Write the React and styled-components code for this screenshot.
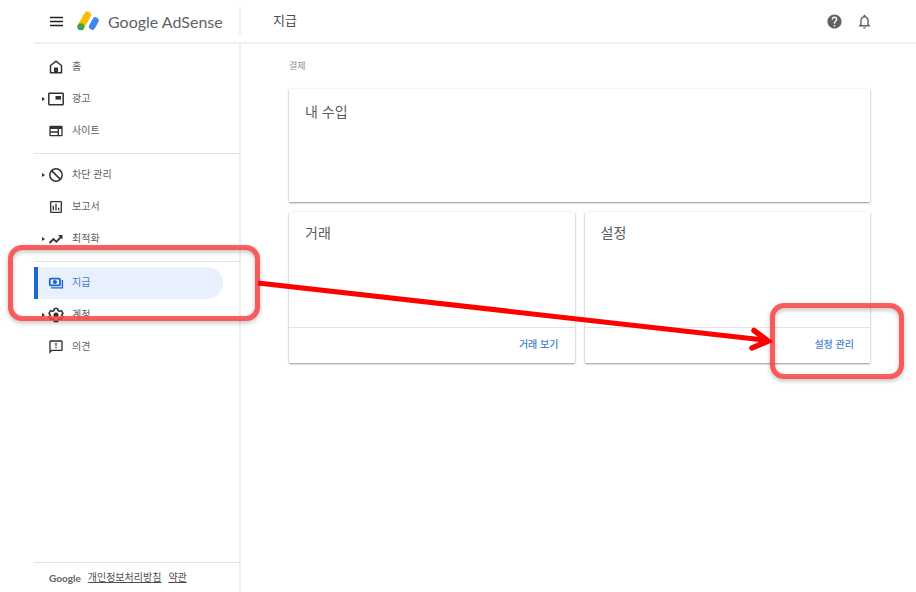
import React from "react";
import styled, { createGlobalStyle } from "styled-components";
import {
  MdHelp,
  MdOutlineAssessment,
  MdOutlineFeedback,
  MdOutlineNotifications,
  MdOutlineWeb,
} from "react-icons/md";

const GlobalStyle = createGlobalStyle`
  *, *::before, *::after {
    box-sizing: border-box;
  }
  body {
    margin: 0;
    background: #fff;
    color: #5f6368;
    font-family: "Liberation Sans", "Noto Sans CJK KR", sans-serif;
    font-size: 10px;
    line-height: 16px;
  }
`;

const Page = styled.div`
  position: relative;
  display: flex;
  flex-direction: column;
  min-height: 100vh;
  padding-left: 34px;
`;

const Header = styled.header`
  display: flex;
  align-items: center;
  height: 44px;
  padding-right: 43px;
  border-bottom: 2px solid #efefef;
`;

const Brand = styled.div`
  display: flex;
  align-items: center;
  width: 207px;
  height: 28px;
  padding-left: 16px;
  border-right: 2px solid #efefef;
`;

const IconButton = styled.button`
  display: flex;
  padding: 0;
  border: none;
  background: none;
  color: #5f6368;
  cursor: pointer;
`;

const MenuButton = styled(IconButton)`
  margin-right: 14px;
  color: #202124;
`;

const Logo = styled.a`
  display: flex;
  align-items: center;
  gap: 9px;
  color: #5f6368;
  text-decoration: none;
`;

const LogoText = styled.span`
  padding-top: 2px;
  font-family: Lato, sans-serif;
  font-size: 16px;
  line-height: 24px;
  white-space: nowrap;
`;

const PageTitle = styled.h1`
  flex: 1;
  margin: 0;
  padding-left: 32px;
  color: #4b4f53;
  font-size: 13px;
  font-weight: 400;
  line-height: 20px;
`;

const Actions = styled.div`
  display: flex;
  gap: 13px;
`;

const Body = styled.div`
  display: flex;
  flex: 1;
`;

const Sidebar = styled.aside`
  display: flex;
  flex: 0 0 207px;
  flex-direction: column;
  padding-top: 7px;
  border-right: 2px solid #efefef;
`;

const NavGroup = styled.ul`
  margin: 0;
  padding: 0;
  list-style: none;

  & + & {
    margin-top: 6px;
    padding-top: 5px;
    border-top: 1px solid #e0e0e0;
  }
`;

const NavLink = styled.a`
  display: grid;
  grid-template-columns: 10px 17px 1fr;
  align-items: center;
  height: 32px;
  margin-right: 16px;
  border-left: 4px solid ${({ $active }) => ($active ? "#1967d2" : "transparent")};
  border-radius: 0 16px 16px 0;
  background: ${({ $active }) => ($active ? "#e8f0fe" : "transparent")};
  color: ${({ $active }) => ($active ? "#3f7ccf" : "#5a5e62")};
  text-decoration: none;

  svg {
    color: ${({ $active }) => ($active ? "#1967d2" : "#303236")};
  }
`;

const Caret = styled.span`
  justify-self: center;
  border: 2px solid transparent;
  border-right: none;
  border-left: 3px solid #303236;
  visibility: ${({ $shown }) => ($shown ? "visible" : "hidden")};
`;

const NavLabel = styled.span`
  padding-left: 7px;
`;

const Legal = styled.footer`
  display: flex;
  align-items: center;
  gap: 7px;
  height: 30px;
  margin-top: auto;
  padding: 1px 0 0 15px;
  border-top: 1px solid #e0e0e0;

  a {
    color: #4b4f53;
  }
`;

const LegalBrand = styled.span`
  font-family: Lato, sans-serif;
  font-weight: 700;
`;

const Main = styled.main`
  flex: 1;
  padding: 14px 46px 32px 48px;
`;

const SectionLabel = styled.p`
  margin: 0 0 15px;
  color: #8d9297;
  font-size: 9px;
`;

const Cards = styled.div`
  display: grid;
  grid-template-columns: 1fr 1fr;
  gap: 10px;
`;

const Card = styled.section`
  display: flex;
  flex-direction: column;
  min-height: ${({ $wide }) => ($wide ? "113px" : "151px")};
  grid-column: ${({ $wide }) => ($wide ? "1 / -1" : "auto")};
  border-radius: 1px;
  background: #fff;
  box-shadow: 0 1px 2px rgba(0, 0, 0, 0.4), 0 0 2px rgba(0, 0, 0, 0.1);
`;

const CardTitle = styled.h2`
  flex: 1;
  margin: 0;
  padding: ${({ $wide }) => ($wide ? "13px" : "11px")} 16px;
  color: #5a5a5a;
  font-size: 14px;
  font-weight: 400;
  line-height: 20px;
`;

const CardFooter = styled.div`
  display: flex;
  justify-content: flex-end;
  padding: 9px 16px 10px;
  border-top: 1px solid #e4e4e4;

  a {
    color: #4482cc;
    font-weight: 500;
    text-decoration: none;
  }
`;

const Highlight = styled.div`
  position: absolute;
  top: ${({ $top }) => $top}px;
  left: ${({ $left }) => $left}px;
  width: ${({ $width }) => $width}px;
  height: 76px;
  border: 5px solid rgba(255, 64, 64, 0.82);
  border-radius: 14px;
  filter: drop-shadow(0 2px 2px rgba(0, 0, 0, 0.3));
  pointer-events: none;
`;

const Arrow = styled.svg`
  position: absolute;
  top: 270px;
  left: 250px;
  pointer-events: none;
`;

const MenuIcon = () => (
  <svg width="13" height="12" viewBox="0 0 13 12" aria-hidden="true">
    <path d="M0 2.500h13M0 6.500h13M0 10.500h13" stroke="currentColor" strokeWidth="1.600" />
  </svg>
);

const AdSenseMark = () => (
  <svg width="22" height="20" viewBox="0 0 22 20" fill="none" strokeLinecap="round" aria-hidden="true">
    <path d="M4 15.500L10.500 4" stroke="#fbbc04" strokeWidth="7" />
    <path d="M15.200 15.500L18.500 9.500" stroke="#4285f4" strokeWidth="6.500" />
    <circle cx="3.800" cy="15.800" r="3.500" fill="#34a853" />
  </svg>
);

const Glyph = styled.svg.attrs({ viewBox: "0 0 16 16", "aria-hidden": true })`
  width: 16px;
  height: 16px;
  fill: none;
  stroke: currentColor;
  stroke-width: 1.5;
`;

const HomeIcon = () => (
  <Glyph>
    <path d="M2.500 6.500L8 2.200l5.500 4.300v7.200h-11z" />
    <path d="M6 8.500h4v5H6z" fill="currentColor" stroke="none" />
  </Glyph>
);

const AdsIcon = () => (
  <Glyph>
    <rect x="0.800" y="2.300" width="14.400" height="11.400" rx="0.600" />
    <path d="M7.500 5h5.500v3.600H7.500z" fill="currentColor" stroke="none" />
  </Glyph>
);

const BlockIcon = () => (
  <Glyph>
    <circle cx="8" cy="8" r="6.200" />
    <path d="M3.600 3.600l8.800 8.800" />
  </Glyph>
);

const TrendIcon = () => (
  <Glyph>
    <path d="M1.500 12l4-4 2.800 2.800L13.500 5.500" strokeWidth="1.800" />
    <path d="M10 4h4.500v4.500z" fill="currentColor" stroke="none" />
  </Glyph>
);

const PaymentsIcon = () => (
  <Glyph>
    <rect x="1.800" y="3.600" width="10.200" height="6.800" rx="1" strokeWidth="1.800" />
    <circle cx="6.900" cy="7" r="2.100" fill="currentColor" stroke="none" />
    <path d="M14.400 5v7.900H3" strokeWidth="1.400" />
  </Glyph>
);

// cog with a filled hub
const GearIcon = () => (
  <Glyph>
    <path
      d="M6.400 1.500h3.200l.4 2 1.400.8 2-.7 1.600 2.800L13.500 8l1.500 1.600-1.600 2.800-2-.7-1.400.8-.4 2H6.400l-.4-2-1.400-.8-2 .7L1 9.600 2.500 8 1 6.400l1.600-2.800 2 .7L6 3.500z"
      strokeLinejoin="round"
    />
    <circle cx="8" cy="8" r="2.500" fill="currentColor" stroke="none" />
  </Glyph>
);

const navGroups = [
  [
    { id: "home", label: "홈", icon: HomeIcon },
    { id: "ads", label: "광고", icon: AdsIcon, expandable: true },
    { id: "sites", label: "사이트", icon: MdOutlineWeb },
  ],
  [
    { id: "blocking", label: "차단 관리", icon: BlockIcon, expandable: true },
    { id: "reports", label: "보고서", icon: MdOutlineAssessment },
    { id: "optimization", label: "최적화", icon: TrendIcon, expandable: true },
  ],
  [
    { id: "payments", label: "지급", icon: PaymentsIcon, active: true },
    { id: "account", label: "계정", icon: GearIcon, expandable: true },
    { id: "feedback", label: "의견", icon: MdOutlineFeedback },
  ],
];

const cards = [
  { id: "earnings", title: "내 수입", wide: true },
  { id: "transactions", title: "거래", action: "거래 보기" },
  { id: "settings", title: "설정", action: "설정 관리" },
];

const App = () => (
  <>
    <GlobalStyle />
    <Page>
      <Header>
        <Brand>
          <MenuButton aria-label="메뉴">
            <MenuIcon />
          </MenuButton>
          <Logo href="#home">
            <AdSenseMark />
            <LogoText>Google AdSense</LogoText>
          </Logo>
        </Brand>
        <PageTitle>지급</PageTitle>
        <Actions>
          <IconButton aria-label="도움말">
            <MdHelp size={17} />
          </IconButton>
          <IconButton aria-label="알림">
            <MdOutlineNotifications size={17} />
          </IconButton>
        </Actions>
      </Header>
      <Body>
        <Sidebar>
          <nav>
            {navGroups.map((group) => (
              <NavGroup key={group[0].id}>
                {group.map(({ id, label, icon: Icon, expandable, active }) => (
                  <li key={id}>
                    <NavLink href={`#${id}`} $active={active}>
                      <Caret $shown={expandable} />
                      <Icon size={16} />
                      <NavLabel>{label}</NavLabel>
                    </NavLink>
                  </li>
                ))}
              </NavGroup>
            ))}
          </nav>
          <Legal>
            <LegalBrand>Google</LegalBrand>
            <a href="#privacy">개인정보처리방침</a>
            <a href="#terms">약관</a>
          </Legal>
        </Sidebar>
        <Main>
          <SectionLabel>결제</SectionLabel>
          <Cards>
            {cards.map(({ id, title, wide, action }) => (
              <Card key={id} $wide={wide}>
                <CardTitle $wide={wide}>{title}</CardTitle>
                {action && (
                  <CardFooter>
                    <a href={`#${id}`}>{action}</a>
                  </CardFooter>
                )}
              </Card>
            ))}
          </Cards>
        </Main>
      </Body>
      <Highlight $top={245} $left={8} $width={252} />
      <Highlight $top={303} $left={770} $width={134} />
      <Arrow width="530" height="90" viewBox="0 0 530 90" fill="none" stroke="#f00" strokeWidth="5" aria-hidden="true">
        <path d="M8 13L514 70" />
        <path d="M504 60.500L518 71L502 78" strokeWidth="5.500" strokeLinecap="round" />
      </Arrow>
    </Page>
  </>
);

export default App;
